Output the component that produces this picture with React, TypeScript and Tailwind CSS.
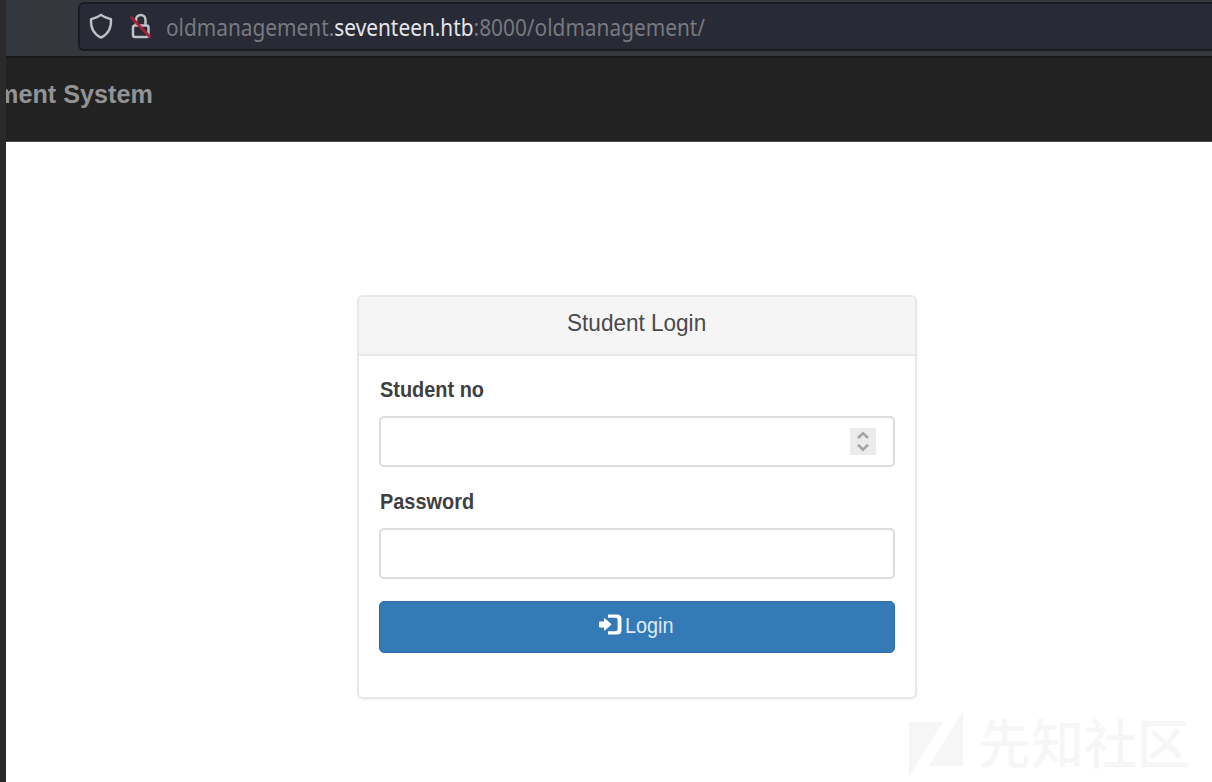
import React from "react";

function ShieldIcon() {
  return (
    <svg width="24" height="27" viewBox="0 0 24 27" fill="none" stroke="#c0c1c5" strokeWidth="2.3" strokeLinejoin="round">
      <path d="M12 1.8 C9 4.2 5.5 5 2 6.2 C1.6 14 4.5 21 12 24.6 C19.5 21 22.4 14 22 6.2 C18.5 5 15 4.2 12 1.8 Z" />
    </svg>
  );
}

function InsecureLockIcon() {
  return (
    <svg width="22" height="27" viewBox="0 0 22 27" fill="none">
      <rect x="3" y="12.5" width="15.5" height="11.5" rx="2" stroke="#c0c1c5" strokeWidth="2.5" />
      <path d="M6 13 V7 C6 0.3 15.5 0.3 15.5 7 V13" stroke="#c0c1c5" strokeWidth="2.5" />
      <path d="M1 4 L20.5 24.5" stroke="#a82038" strokeWidth="2.7" />
    </svg>
  );
}

function LoginIcon() {
  return (
    <svg width="23" height="21" viewBox="0 0 23 21" fill="#fff">
      <path d="M1 7.4 H5 V5 Q5 3.8 6 4.6 L12 9.8 Q12.6 10.3 12 10.9 L6 16.2 Q5 17 5 15.8 V13.4 H1 Q0 13.4 0 12.4 V8.4 Q0 7.4 1 7.4 Z" />
      <path d="M9 0.5 H18 Q22.5 0.5 22.5 5 V16 Q22.5 20.5 18 20.5 H9 V17.2 H16.5 Q18.6 17.2 18.6 15.2 V5.8 Q18.6 3.8 16.5 3.8 H9 Z" />
    </svg>
  );
}

function Spinner() {
  return (
    <svg className="bg-[#ebebeb]" width="26" height="27" viewBox="0 0 26 27" fill="none" stroke="#a2a5a9" strokeWidth="2.6">
      <path d="M8 10 L13 5.2 L18 10" />
      <path d="M8 16.8 L13 21.6 L18 16.8" />
    </svg>
  );
}

function Field({ label, children }: { label: string; children?: React.ReactNode }) {
  return (
    <div>
      <div className="h-[39px] pl-px">
        <span className="inline-block origin-left scale-x-[0.905] text-[22px] leading-[26px] font-bold text-[#404040]">{label}</span>
      </div>
      <div className="flex h-[51px] items-center justify-end rounded-[5px] border-2 border-[#dcdcdc] bg-white pr-[17px]">{children}</div>
    </div>
  );
}

export default function App() {
  return (
    <div className="relative flex h-[782px] w-[1212px] overflow-hidden bg-white font-['Liberation_Sans',sans-serif]">
      <div className="w-[6px] shrink-0 bg-[#2a2a2b]" />
      <div className="flex min-w-0 grow flex-col">
        <header className="h-[58px] shrink-0 border-b-2 border-[#18181c] bg-[#35373f] pt-[2px] pl-[72px]">
          <div className="flex h-[49px] items-center rounded-l-[6px] border-2 border-r-0 border-[#1a1b20] bg-[#282a35] pl-[9px]">
            <ShieldIcon />
            <span className="ml-[17px] flex"><InsecureLockIcon /></span>
            <span className="ml-[14px] inline-block origin-left scale-x-[0.906] font-['Noto_Sans',sans-serif] text-[23px] leading-[30px] whitespace-nowrap text-[#777980]">
              oldmanagement.<span className="text-[#e4e5e9]">seventeen.htb</span>:8000/oldmanagement/
            </span>
          </div>
        </header>
        <nav className="flex h-[84px] shrink-0 overflow-hidden border-b border-[#4a4a4a] bg-[#222222] pt-[21px]">
          <span className="-ml-[10px] text-[25.2px] leading-[30px] font-bold whitespace-nowrap text-[#929396]">ment System</span>
        </nav>
        <main className="pt-[153px] pl-[351px]">
          <section className="h-[404px] w-[560px] overflow-hidden rounded-[6px] border-2 border-[#e8e8e8] bg-white shadow-[0_1px_2px_rgba(0,0,0,0.05)]">
            <h1 className="flex h-[59px] justify-center border-b-2 border-[#e8e8e8] bg-[#f5f5f5] pt-[12px]">
              <span className="inline-block scale-x-[0.92] text-[24.5px] leading-[28px] whitespace-nowrap text-[#4a4a4a]">Student Login</span>
            </h1>
            <form className="flex flex-col gap-[22px] px-[20px] pt-[21px]">
              <Field label="Student no"><Spinner /></Field>
              <Field label="Password" />
              <button type="button" className="flex h-[52px] items-start justify-center rounded-[5px] border border-[#2e6da4] bg-[#337ab7] pt-[12px] pl-[4px]">
                <LoginIcon />
                <span className="ml-[3px] inline-block origin-left scale-x-[0.9] text-[22px] leading-[24px] text-[#dfeaf3]">Login</span>
              </button>
            </form>
          </section>
        </main>
      </div>
      <div className="absolute top-[708px] left-[909px] flex items-start text-[#f6f6f6]">
        <svg width="55" height="70" viewBox="0 0 55 70" fill="#f6f6f6">
          <path d="M0 14 H34 L0 68 Z" />
          <path d="M54 3 V58 H20 Z" />
        </svg>
        <span className="ml-[14px] pt-[6px] font-['Noto_Sans_CJK_SC',sans-serif] text-[53px] leading-[54px] font-medium whitespace-nowrap">先知社区</span>
      </div>
    </div>
  );
}
